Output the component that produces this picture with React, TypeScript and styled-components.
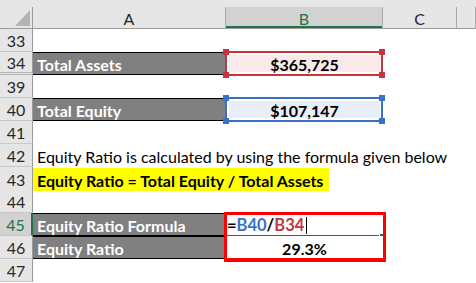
import React from "react";
import styled, { createGlobalStyle } from "styled-components";

const GlobalStyle = createGlobalStyle`
  html, body {
    margin: 0;
    padding: 0;
    background: #fff;
  }
  body {
    font-family: Lato, "Liberation Sans", sans-serif;
  }
`;

const COLS = "33px 193px 157px 74px 1fr";
const GREEN = "#217346";

const Sheet = styled.div`
  position: relative;
  width: 476px;
  height: 283px;
  overflow: hidden;
  background: #fff;
  font-family: Lato, "Liberation Sans", sans-serif;
  color: #000;
`;

const TopStrip = styled.div`
  height: 7px;
  background: #e6e6e6;
`;

const HeaderRow = styled.div`
  display: grid;
  grid-template-columns: ${COLS};
  height: 22px;
  background: #e6e6e6;
`;

const Corner = styled.div`
  position: relative;
  border-right: 1px solid #9b9b9b;
  border-bottom: 1px solid #9b9b9b;

  svg {
    position: absolute;
    left: 15px;
    top: 3px;
  }
`;

const ColHead = styled.div<{ $selected?: boolean }>`
  display: flex;
  align-items: center;
  justify-content: center;
  font-size: 16px;
  color: ${p => (p.$selected ? GREEN : "#262626")};
  background: ${p => (p.$selected ? "#d2d2d2" : "#e6e6e6")};
  border-right: 1px solid #ababab;
  border-bottom: 1px solid #9b9b9b;
  box-shadow: ${p => (p.$selected ? `inset 0 -2px 0 ${GREEN}` : "none")};
  padding-top: 1px;
`;

const Row = styled.div`
  display: grid;
  grid-template-columns: ${COLS};
  height: 23px;
`;

const RowHead = styled.div<{ $selected?: boolean; $gap?: boolean }>`
  display: flex;
  align-items: center;
  justify-content: center;
  font-size: 16px;
  padding-top: 1px;
  color: ${p => (p.$selected ? GREEN : "#262626")};
  background: ${p => (p.$selected ? "#d2d2d2" : "#e6e6e6")};
  border-right: ${p => (p.$selected ? `2px solid ${GREEN}` : "1px solid #9b9b9b")};
  border-bottom: ${p => (p.$gap ? "3px double #b4b4b4" : "1px solid #c8c8c8")};
`;

const Cell = styled.div<{ $span?: boolean }>`
  display: flex;
  align-items: center;
  padding: 1px 0 0 4px;
  font-size: 16px;
  white-space: nowrap;
  grid-column: ${p => (p.$span ? "2 / -1" : "auto")};
`;

const LabelCell = styled(Cell)`
  background: #808080;
  color: #fff;
  font-weight: 700;
  border-top: 1px solid #000;
  border-bottom: 1px solid #000;
`;

const ValueCell = styled(Cell)<{ $fill?: string }>`
  position: relative;
  justify-content: center;
  padding-left: 0;
  font-weight: 700;
  background: ${p => p.$fill || "#fff"};
  box-shadow: ${p => (p.$fill ? "inset 0 0 0 3px #fff" : "none")};
`;

const RangeMark = styled.div<{ $color: string }>`
  position: absolute;
  left: -1px;
  right: 0;
  top: -1px;
  bottom: -1px;
  border: 2px solid ${p => p.$color};
  pointer-events: none;
`;

const Handle = styled.span<{ $color: string; $x: "left" | "right"; $y: "top" | "bottom" }>`
  position: absolute;
  width: 6px;
  height: 6px;
  background: ${p => p.$color};
  ${p => p.$x}: -4px;
  ${p => p.$y}: -4px;
`;

const Highlight = styled.span`
  display: inline-flex;
  align-items: center;
  width: 296px;
  height: 23px;
  margin-left: -4px;
  padding: 1px 0 0 4px;
  box-sizing: border-box;
  background: #ffff00;
  font-weight: 700;
`;

const FormulaCell = styled(Cell)`
  position: relative;
  padding-left: 1px;
  font-weight: 700;
  font-size: 16.5px;

  &::after {
    content: "";
    position: absolute;
    left: 0;
    right: 4px;
    bottom: -1px;
    height: 2px;
    background: ${GREEN};
  }

  &::before {
    content: "";
    position: absolute;
    right: 0;
    bottom: -2px;
    width: 3px;
    height: 4px;
    background: ${GREEN};
  }
`;

const Ref = styled.span<{ $color: string }>`
  color: ${p => p.$color};
`;

const Caret = styled.span`
  display: inline-block;
  width: 1px;
  height: 17px;
  margin-left: 2px;
  background: #000;
`;

const RedBox = styled.div`
  position: absolute;
  left: 224px;
  top: 212px;
  width: 162px;
  height: 50px;
  box-sizing: border-box;
  border: 3px solid #ff0000;
  border-bottom-width: 4px;
  pointer-events: none;
`;

function Marked({ color }: { color: string }) {
  return (
    <RangeMark $color={color}>
      <Handle $color={color} $x="left" $y="top" />
      <Handle $color={color} $x="right" $y="top" />
      <Handle $color={color} $x="left" $y="bottom" />
      <Handle $color={color} $x="right" $y="bottom" />
    </RangeMark>
  );
}

export default function App() {
  return (
    <>
      <GlobalStyle />
      <Sheet>
        <TopStrip />
        <HeaderRow>
          <Corner>
            <svg width="15" height="16" viewBox="0 0 15 16">
              <polygon points="15,0 15,16 0,16" fill="#b4b4b4" />
            </svg>
          </Corner>
          <ColHead>A</ColHead>
          <ColHead $selected>B</ColHead>
          <ColHead>C</ColHead>
          <ColHead />
        </HeaderRow>

        <Row>
          <RowHead>33</RowHead>
        </Row>
        <Row>
          <RowHead $gap>34</RowHead>
          <LabelCell>Total Assets</LabelCell>
          <ValueCell $fill="#f9e9e9">
            $365,725
            <Marked color="#c6343d" />
          </ValueCell>
        </Row>
        <Row>
          <RowHead>39</RowHead>
        </Row>
        <Row>
          <RowHead>40</RowHead>
          <LabelCell>Total Equity</LabelCell>
          <ValueCell $fill="#e8eef8">
            $107,147
            <Marked color="#3a70c6" />
          </ValueCell>
        </Row>
        <Row>
          <RowHead>41</RowHead>
        </Row>
        <Row>
          <RowHead>42</RowHead>
          <Cell $span>Equity Ratio is calculated by using the formula given below</Cell>
        </Row>
        <Row>
          <RowHead>43</RowHead>
          <Cell $span>
            <Highlight>Equity Ratio = Total Equity / Total Assets</Highlight>
          </Cell>
        </Row>
        <Row>
          <RowHead>44</RowHead>
        </Row>
        <Row>
          <RowHead $selected>45</RowHead>
          <LabelCell>Equity Ratio Formula</LabelCell>
          <FormulaCell>
            =<Ref $color="#3a70c6">B40</Ref>/<Ref $color="#c6343d">B34</Ref>
            <Caret />
          </FormulaCell>
        </Row>
        <Row>
          <RowHead>46</RowHead>
          <LabelCell>Equity Ratio</LabelCell>
          <ValueCell>29.3%</ValueCell>
        </Row>
        <Row>
          <RowHead>47</RowHead>
        </Row>

        <RedBox />
      </Sheet>
    </>
  );
}
